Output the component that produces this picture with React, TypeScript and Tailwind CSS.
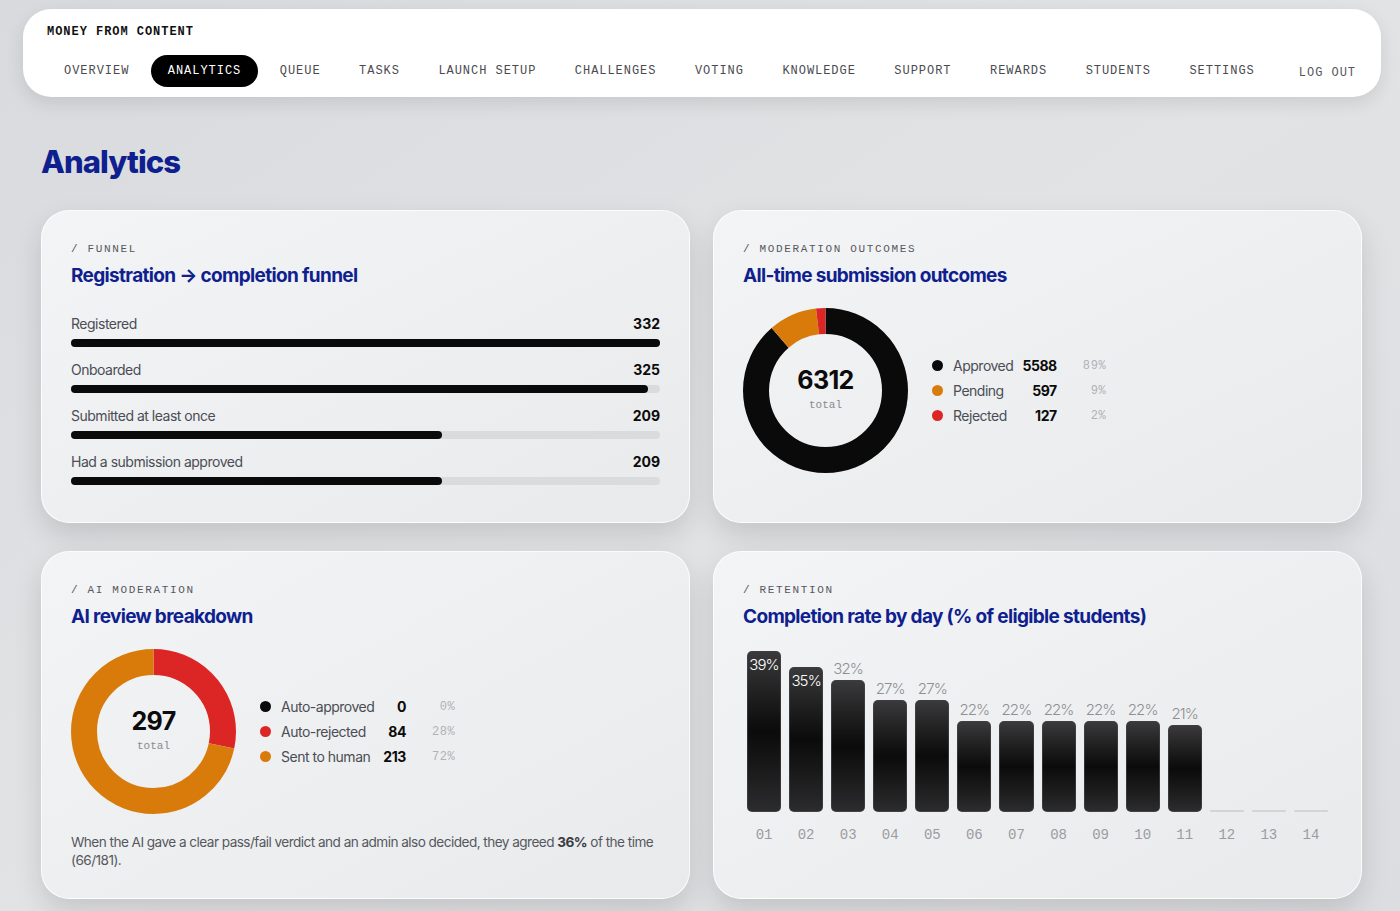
const mono = "font-['Liberation_Mono','DejaVu_Sans_Mono',monospace]";
const sans = "font-['Inter','Liberation_Sans',sans-serif]";

const tabs = [
  "OVERVIEW",
  "ANALYTICS",
  "QUEUE",
  "TASKS",
  "LAUNCH SETUP",
  "CHALLENGES",
  "VOTING",
  "KNOWLEDGE",
  "SUPPORT",
  "REWARDS",
  "STUDENTS",
  "SETTINGS",
];

const funnel = [
  { label: "Registered", value: 332 },
  { label: "Onboarded", value: 325 },
  { label: "Submitted at least once", value: 209 },
  { label: "Had a submission approved", value: 209 },
];

const days = [39, 35, 32, 27, 27, 22, 22, 22, 22, 22, 21, null, null, null];

type Slice = { label: string; value: number; pct: string; color: string; dot: string };

function Donut({ slices, total }: { slices: Slice[]; total: number }) {
  const r = 69.5;
  const c = 2 * Math.PI * r;
  let offset = 0;
  return (
    <div className="relative h-[165px] w-[165px] shrink-0">
      <svg width="165" height="165" viewBox="0 0 165 165" className="-rotate-90">
        {slices.map((s) => {
          const len = (s.value / total) * c;
          const el = (
            <circle
              key={s.label}
              cx="82.5"
              cy="82.5"
              r={r}
              fill="none"
              stroke={s.color}
              strokeWidth="26"
              strokeDasharray={`${len} ${c - len}`}
              strokeDashoffset={-offset}
            />
          );
          offset += len;
          return el;
        })}
      </svg>
      <div className="absolute inset-0 flex flex-col items-center justify-center">
        <span className={`${sans} text-[25px] font-bold leading-none tracking-tight text-[#0b0b0b]`}>
          {total}
        </span>
        <span className={`${mono} mt-[4px] text-[11px] text-[#8a8b8e]`}>total</span>
      </div>
    </div>
  );
}

function Legend({ slices }: { slices: Slice[] }) {
  return (
    <div className="grid grid-cols-[10px_auto_auto_auto] items-center gap-y-[5px]">
      {slices.map((s) => (
        <div key={s.label} className="contents">
          <span className={`h-[11px] w-[11px] rounded-full ${s.dot}`} />
          <span className={`${sans} ml-[11px] text-[14px] leading-[20px] tracking-[-0.035em] text-[#4a4d55]`}>
            {s.label}
          </span>
          <span className={`${sans} ml-[9px] text-right text-[14px] font-bold leading-[20px] tracking-[-0.03em] text-[#0b0b0b]`}>
            {s.value}
          </span>
          <span className={`${mono} ml-[26px] text-right text-[12px] tracking-[0.05em] text-[#b0b2b6]`}>
            {s.pct}
          </span>
        </div>
      ))}
    </div>
  );
}

function Card({
  label,
  title,
  pb,
  children,
}: {
  label: string;
  title: string;
  pb: string;
  children: React.ReactNode;
}) {
  return (
    <div
      className={`rounded-[28px] border border-white/80 bg-gradient-to-br from-[#f3f4f5] to-[#e9eaeb] px-[29px] pt-[30px] shadow-[0_12px_28px_rgba(0,0,0,0.13)] ${pb}`}
    >
      <div className={`${mono} text-[11px] leading-[16px] tracking-[0.15em] text-[#55585e]`}>
        / {label}
      </div>
      <h2 className={`${sans} mt-[7px] text-[19px] font-bold leading-[24px] tracking-[-0.035em] text-[#0f1f8f]`}>
        {title}
      </h2>
      {children}
    </div>
  );
}

export default function App() {
  const outcomes: Slice[] = [
    { label: "Approved", value: 5588, pct: "89%", color: "#0a0a0a", dot: "bg-[#0a0a0a]" },
    { label: "Pending", value: 597, pct: "9%", color: "#d97b0b", dot: "bg-[#d97b0b]" },
    { label: "Rejected", value: 127, pct: "2%", color: "#dc2626", dot: "bg-[#dc2626]" },
  ];

  const ai: Slice[] = [
    { label: "Auto-approved", value: 0, pct: "0%", color: "#0a0a0a", dot: "bg-[#0a0a0a]" },
    { label: "Auto-rejected", value: 84, pct: "28%", color: "#dc2626", dot: "bg-[#dc2626]" },
    { label: "Sent to human", value: 213, pct: "72%", color: "#d97b0b", dot: "bg-[#d97b0b]" },
  ];

  return (
    <div className="min-h-[911px] bg-gradient-to-br from-[#d9dadd] via-[#e2e3e5] to-[#dcdde0] pt-[9px] pb-[13px]">
      {/* top nav */}
      <div className="ml-[23px] mr-[19px] rounded-[28px] bg-white pl-[24px] pr-[25px] pt-[15px] pb-[10px] shadow-[0_6px_18px_rgba(0,0,0,0.1)]">
        <div className={`${mono} text-[12px] font-bold leading-[16px] tracking-[0.08em] text-[#111]`}>
          MONEY FROM CONTENT
        </div>
        <nav className="mt-[15px] flex items-center gap-[4.5px]">
          {tabs.map((t) => (
            <span
              key={t}
              className={`${mono} flex h-[32px] items-center rounded-full px-[17px] text-[12px] tracking-[0.08em] ${
                t === "ANALYTICS" ? "bg-black text-white" : "text-[#4a4b4f]"
              }`}
            >
              {t}
            </span>
          ))}
          <span className={`${mono} ml-auto pt-[4px] text-[12px] tracking-[0.08em] text-[#55575c]`}>
            LOG OUT
          </span>
        </nav>
      </div>

      <main className="pl-[41px] pr-[38px]">
        <h1 className={`${sans} mt-[47px] text-[31px] font-extrabold leading-[36px] tracking-[-0.03em] text-[#0f1f8f]`}>
          Analytics
        </h1>

        <div className="mt-[30px] grid grid-cols-2 gap-x-[23px] gap-y-[28px]">
          <Card label="FUNNEL" title="Registration → completion funnel" pb="pb-[37px]">
            <div className="mt-[26px] flex flex-col gap-[13px]">
              {funnel.map((f) => (
                <div key={f.label}>
                  <div className={`${sans} flex justify-between text-[14px] leading-[20px]`}>
                    <span className="tracking-[-0.035em] text-[#4a4d55]">{f.label}</span>
                    <span className="font-bold text-[#0b0b0b]">{f.value}</span>
                  </div>
                  <div className="mt-[5px] h-[8px] rounded-full bg-[#dadbdd]">
                    <div
                      className="h-full rounded-full bg-[#0a0a0a]"
                      style={{ width: `${(f.value / 332) * 100}%` }}
                    />
                  </div>
                </div>
              ))}
            </div>
          </Card>

          <Card label="MODERATION OUTCOMES" title="All-time submission outcomes" pb="pb-[35px]">
            <div className="mt-[20px] flex items-center gap-[24px]">
              <Donut slices={outcomes} total={6312} />
              <Legend slices={outcomes} />
            </div>
          </Card>

          <Card label="AI MODERATION" title="AI review breakdown" pb="pb-[29px]">
            <div className="mt-[20px] flex items-center gap-[24px]">
              <Donut slices={ai} total={297} />
              <Legend slices={ai} />
            </div>
            <p className={`${sans} mt-[19px] text-[13.6px] leading-[18px] tracking-[-0.04em] text-[#55585f]`}>
              When the AI gave a clear pass/fail verdict and an admin also decided, they agreed{" "}
              <span className="font-bold text-[#3a3c42]">36%</span> of the time (66/181).
            </p>
          </Card>

          <Card label="RETENTION" title="Completion rate by day (% of eligible students)" pb="pb-[29px]">
            <div className="mt-[22px] grid grid-cols-14 gap-x-[8px] px-[4px]">
              {days.map((d, i) => {
                const h = d === null ? 0 : Math.round(d * 4.13);
                const inside = d !== null && h + 20 > 161;
                return (
                  <div key={i} className="flex h-[161px] flex-col items-stretch justify-end">
                    {d === null ? (
                      <div className="h-[2px] rounded-full bg-[#d3d4d6]" />
                    ) : (
                      <>
                        {!inside && (
                          <span className={`${sans} mb-[3px] text-center text-[15px] font-light leading-[17px] tracking-[-0.06em] text-[#8d8f93]`}>
                            {d}%
                          </span>
                        )}
                        <div
                          className="rounded-[5px] border border-[#4a4a4c]/60 bg-gradient-to-b from-[#3a3a3c] via-[#0b0b0b] to-[#2c2c2e] text-center"
                          style={{ height: h }}
                        >
                          {inside && (
                            <span className={`${sans} text-[15px] font-light leading-[17px] tracking-[-0.06em] text-white`}>
                              {d}%
                            </span>
                          )}
                        </div>
                      </>
                    )}
                  </div>
                );
              })}
              {days.map((_, i) => (
                <span
                  key={`d${i}`}
                  className={`${mono} mt-[14px] text-center text-[14px] leading-[18px] text-[#9a9ca0]`}
                >
                  {String(i + 1).padStart(2, "0")}
                </span>
              ))}
            </div>
          </Card>
        </div>
      </main>
    </div>
  );
}
